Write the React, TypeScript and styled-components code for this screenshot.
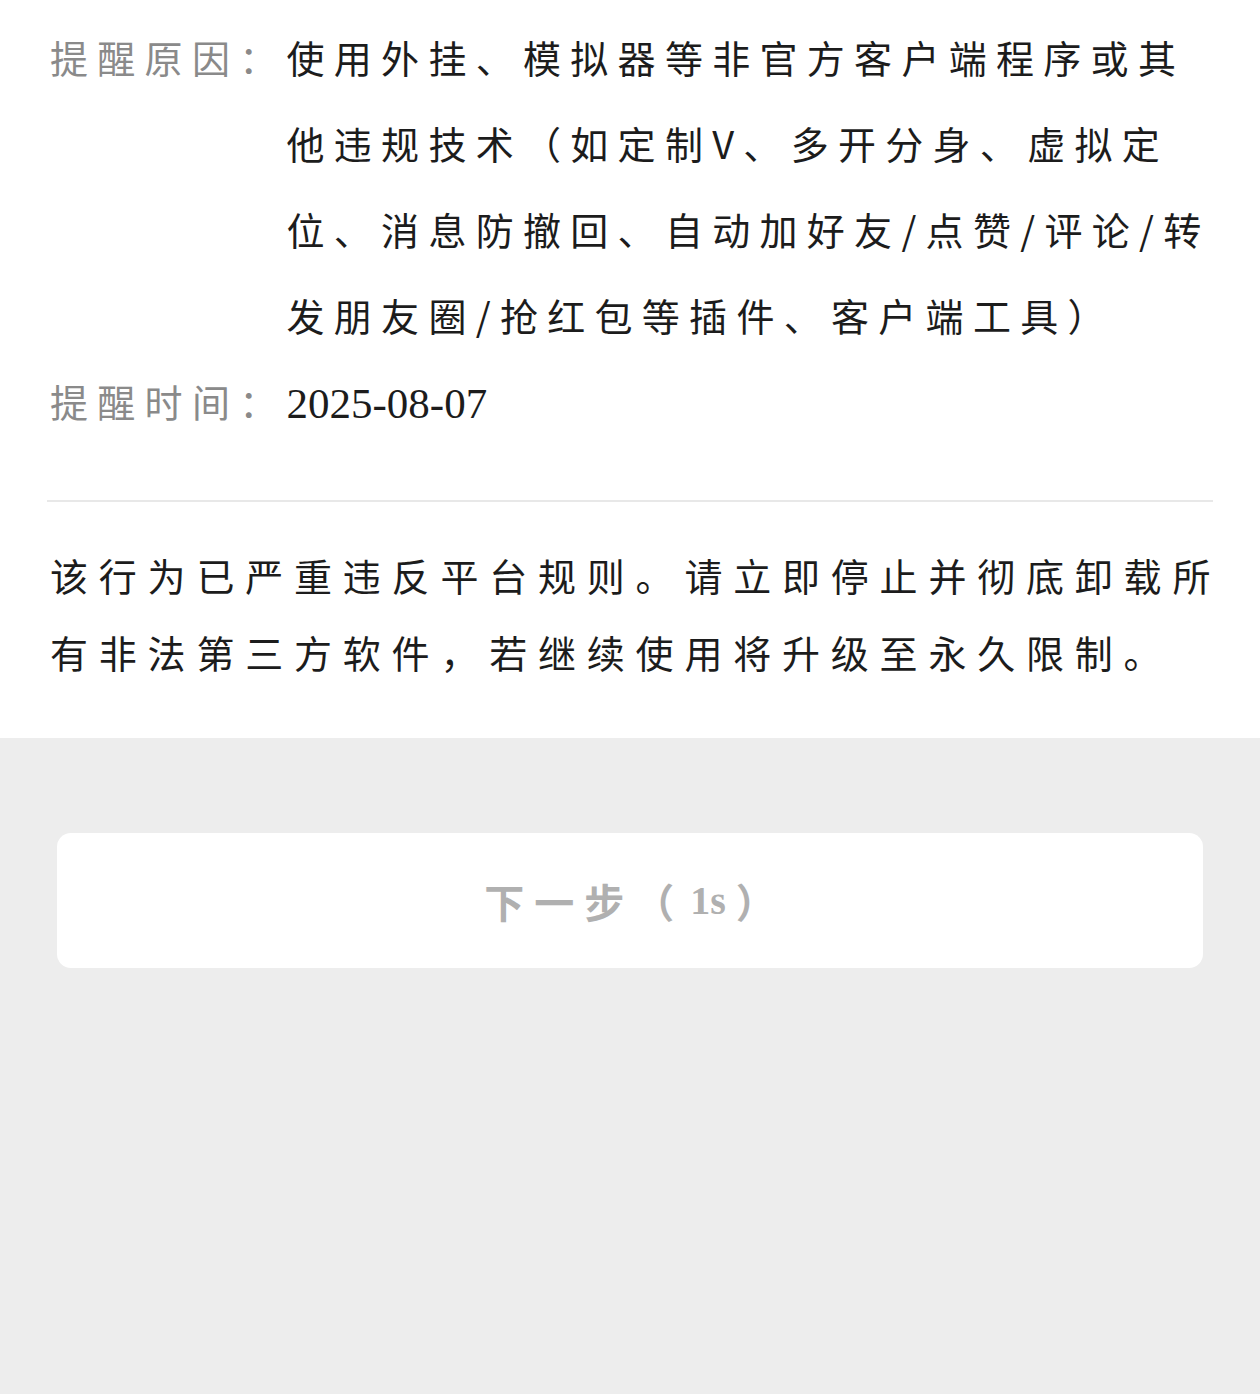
import React from "react";
import styled, { createGlobalStyle } from "styled-components";

const GlobalStyle = createGlobalStyle`
  html, body {
    margin: 0;
    padding: 0;
    background: #ededed;
  }
  body {
    font-family: "Liberation Serif", "Noto Sans CJK SC", serif;
    text-spacing-trim: space-all;
  }
  * { box-sizing: border-box; }
`;

const Page = styled.div`
  min-height: 1394px;
  background: #ededed;
  display: flex;
  flex-direction: column;
`;

const Card = styled.section`
  background: #ffffff;
  padding: 17px 47px 44px;
`;

const InfoList = styled.dl`
  margin: 0;
  padding: 0 0 53px 3px;
`;

const InfoRow = styled.div`
  display: flex;
  align-items: flex-start;
`;

const Label = styled.dt`
  flex: 0 0 236px;
  margin: 0;
  font-size: 38px;
  line-height: 86px;
  letter-spacing: 9.3px;
  color: #8a8a8a;
  white-space: nowrap;
`;

const Value = styled.dd<{ $date?: boolean }>`
  margin: ${(p) => (p.$date ? "0" : "-3px 0 0")};
  padding-bottom: ${(p) => (p.$date ? "0" : "3px")};
  width: 929px;
  font-family: ${(p) =>
    p.$date
      ? `"Liberation Serif", "Noto Sans CJK SC", serif`
      : `"Noto Sans CJK SC", "Liberation Serif", sans-serif`};
  font-size: ${(p) => (p.$date ? "43px" : "38px")};
  line-height: 86px;
  letter-spacing: ${(p) => (p.$date ? "0" : "9.3px")};
  color: #1c1c1c;
`;

const Divider = styled.hr`
  margin: 0;
  border: none;
  border-top: 2px solid #e8e8e8;
`;

const Notice = styled.p`
  margin: 38px -10px 0 0;
  padding-left: 3px;
  font-size: 38px;
  line-height: 77px;
  letter-spacing: 10.8px;
  color: #1c1c1c;
`;

const Footer = styled.div`
  padding: 95px 57px;
`;

const NextButton = styled.button`
  display: flex;
  align-items: center;
  justify-content: center;
  width: 100%;
  height: 135px;
  border: none;
  border-radius: 14px;
  background: #ffffff;
  font-family: "Liberation Serif", "Noto Sans CJK SC", serif;
  font-size: 40px;
  font-weight: 700;
  letter-spacing: 10px;
  color: #b0b0b0;
  padding: 0 0 0 10px;
  cursor: default;
`;

const Countdown = styled.span`
  letter-spacing: 0;
  margin: 0 10px 0 6px;
`;

export default function App() {
  return (
    <Page>
      <GlobalStyle />
      <Card>
        <InfoList>
          <InfoRow>
            <Label>提醒原因：</Label>
            <Value>
              使用外挂、模拟器等非官方客户端程序或其他违规技术（如定制V、多开分身、虚拟定位、消息防撤回、自动加好友/点赞/评论/转发朋友圈/抢红包等插件、客户端工具）
            </Value>
          </InfoRow>
          <InfoRow>
            <Label>提醒时间：</Label>
            <Value $date>2025-08-07</Value>
          </InfoRow>
        </InfoList>
        <Divider />
        <Notice>
          该行为已严重违反平台规则。请立即停止并彻底卸载所有非法第三方软件，若继续使用将升级至永久限制。
        </Notice>
      </Card>
      <Footer>
        <NextButton type="button">
          下一步（<Countdown>1s</Countdown>）
        </NextButton>
      </Footer>
    </Page>
  );
}
